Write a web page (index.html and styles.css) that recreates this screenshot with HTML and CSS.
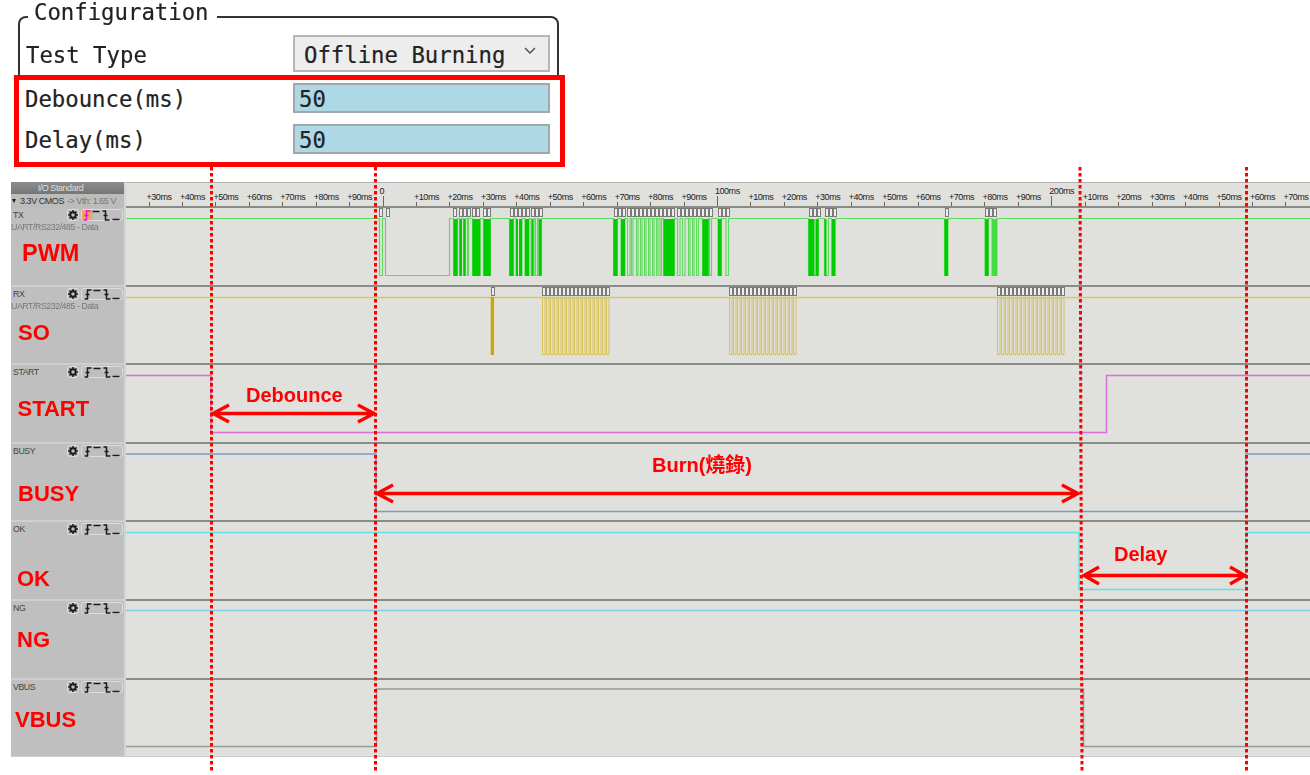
FILE: index.html
```html
<!DOCTYPE html>
<html lang="en">
<head>
<meta charset="utf-8">
<title>Offline Burning timing</title>
<link rel="stylesheet" href="styles.css">
</head>
<body>
<svg class="defs" width="0" height="0" aria-hidden="true">
  <defs>
    <pattern id="mk" patternUnits="userSpaceOnUse" width="4" height="9">
      <rect x="0.5" y="0.5" width="3" height="8" fill="#ecece9" stroke="#7a7a7a"/>
    </pattern>
    <symbol id="gear" viewBox="0 0 10 10">
      <circle cx="5" cy="5" r="2.7" fill="none" stroke="#1c1c1c" stroke-width="1.9"/>
      <path d="M5 0V2M5 8V10M0 5H2M8 5H10M1.5 1.5L3 3M7 7L8.5 8.5M8.5 1.5L7 3M3 7L1.5 8.5" stroke="#1c1c1c" stroke-width="1.5"/>
    </symbol>
    <symbol id="rise" viewBox="0 0 8 11"><path d="M0.5 10H3.5V1H7.5M1.5 5.5H5.5" fill="none" stroke="currentColor" stroke-width="1.5"/></symbol>
    <symbol id="high" viewBox="0 0 8 11"><path d="M0.5 1.5H7.5" fill="none" stroke="currentColor" stroke-width="1.5"/></symbol>
    <symbol id="fall" viewBox="0 0 8 11"><path d="M0.5 1H3.5V10H7.5M1.5 5.5H5.5" fill="none" stroke="currentColor" stroke-width="1.5"/></symbol>
    <symbol id="low" viewBox="0 0 8 11"><path d="M0.5 9.5H7.5" fill="none" stroke="currentColor" stroke-width="1.5"/></symbol>
  </defs>
</svg>

<section class="config">
  <div class="frame">
    <span class="legend">Configuration</span>
    <div class="row">
      <span class="label">Test Type</span>
      <div class="select">Offline Burning
        <svg class="chev" width="12" height="7" viewBox="0 0 12 7"><path d="M1 1L6 6L11 1" fill="none" stroke="#555" stroke-width="1.5"/></svg>
      </div>
    </div>
  </div>
  <div class="highlight">
    <div class="row"><span class="label">Debounce(ms)</span><div class="input">50</div></div>
    <div class="row"><span class="label">Delay(ms)</span><div class="input">50</div></div>
  </div>
</section>

<section class="analyzer">
  <div class="io">
    <div class="io-title">I/O Standard</div>
    <div class="io-value"><span class="tri"></span><b>3.3V CMOS</b><span class="vth">-&gt; Vth: 1.65 V</span></div>
  </div>
  <div class="ruler">
    <div class="tick"><span>+30ms</span><i></i></div>
    <div class="tick"><span>+40ms</span><i></i></div>
    <div class="tick"><span>+50ms</span><i></i></div>
    <div class="tick"><span>+60ms</span><i></i></div>
    <div class="tick"><span>+70ms</span><i></i></div>
    <div class="tick"><span>+80ms</span><i></i></div>
    <div class="tick"><span>+90ms</span><i></i></div>
    <div class="tick major zero"><span>0</span><i></i></div>
    <div class="tick"><span>+10ms</span><i></i></div>
    <div class="tick"><span>+20ms</span><i></i></div>
    <div class="tick"><span>+30ms</span><i></i></div>
    <div class="tick"><span>+40ms</span><i></i></div>
    <div class="tick"><span>+50ms</span><i></i></div>
    <div class="tick"><span>+60ms</span><i></i></div>
    <div class="tick"><span>+70ms</span><i></i></div>
    <div class="tick"><span>+80ms</span><i></i></div>
    <div class="tick"><span>+90ms</span><i></i></div>
    <div class="tick major"><span>100ms</span><i></i></div>
    <div class="tick"><span>+10ms</span><i></i></div>
    <div class="tick"><span>+20ms</span><i></i></div>
    <div class="tick"><span>+30ms</span><i></i></div>
    <div class="tick"><span>+40ms</span><i></i></div>
    <div class="tick"><span>+50ms</span><i></i></div>
    <div class="tick"><span>+60ms</span><i></i></div>
    <div class="tick"><span>+70ms</span><i></i></div>
    <div class="tick"><span>+80ms</span><i></i></div>
    <div class="tick"><span>+90ms</span><i></i></div>
    <div class="tick major"><span>200ms</span><i></i></div>
    <div class="tick"><span>+10ms</span><i></i></div>
    <div class="tick"><span>+20ms</span><i></i></div>
    <div class="tick"><span>+30ms</span><i></i></div>
    <div class="tick"><span>+40ms</span><i></i></div>
    <div class="tick"><span>+50ms</span><i></i></div>
    <div class="tick"><span>+60ms</span><i></i></div>
    <div class="tick"><span>+70ms</span><i></i></div>
  </div>

  <!-- TX -->
  <div class="head first">
    <div class="head-row">
      <span class="name">TX</span>
      <span class="gearbtn"><svg width="10" height="10"><use href="#gear"/></svg></span>
      <span class="edges"><span class="edge active"><svg width="8" height="11"><use href="#rise"/></svg></span><span class="edge"><svg width="8" height="11"><use href="#high"/></svg></span><span class="edge"><svg width="8" height="11"><use href="#fall"/></svg></span><span class="edge"><svg width="8" height="11"><use href="#low"/></svg></span></span>
    </div>
    <div class="sub">UART/RS232/485 - Data</div>
  </div>
  <div class="track first">
    <svg class="wave" viewBox="126 208 1184 77" preserveAspectRatio="none">
      <g class="tx-markers">
        <rect transform="translate(379 208)" width="4" height="9"/>
        <rect transform="translate(386 208)" width="4" height="9"/>
        <rect transform="translate(453 208)" width="4" height="9"/>
        <rect transform="translate(459 208)" width="12" height="9"/>
        <rect transform="translate(472 208)" width="8" height="9"/>
        <rect transform="translate(483 208)" width="8" height="9"/>
        <rect transform="translate(510 208)" width="20" height="9"/>
        <rect transform="translate(531 208)" width="12" height="9"/>
        <rect transform="translate(614 208)" width="12" height="9"/>
        <rect transform="translate(627 208)" width="36" height="9"/>
        <rect transform="translate(663 208)" width="12" height="9"/>
        <rect transform="translate(677 208)" width="36" height="9"/>
        <rect transform="translate(718 208)" width="12" height="9"/>
        <rect transform="translate(809 208)" width="12" height="9"/>
        <rect transform="translate(825 208)" width="12" height="9"/>
        <rect transform="translate(945 208)" width="4" height="9"/>
        <rect transform="translate(985 208)" width="12" height="9"/>
      </g>
      <path class="line tx" d="M126 218.5H379.5V275.5H382.5V218.5H385.5V275.5H449.5V218.5H453.5V275.5H457.5V218.5H459.5V275.5H461.5V218.5H463.5V275.5H465.5V218.5H467.5V275.5H468.5V218.5H472.5V275.5H480.5V218.5H483.5V275.5H490.5V218.5H509.5V275.5H513.5V218.5H516V275.5H522V218.5H525V275.5H529V218.5H531V275.5H534V218.5H535.5V275.5H537.5V218.5H538.5V275.5H541.5V218.5H613.5V275.5H617.5V218.5H621V275.5H625V218.5H627.5V275.5H630V218.5H631.5V275.5H633V218.5H636.5V275.5H638V218.5H640.5V275.5H642V218.5H644.5V275.5H646V218.5H648.5V275.5H650V218.5H652.5V275.5H654V218.5H656.5V275.5H658V218.5H660V275.5H661.5V218.5H663.5V275.5H674.5V218.5H677.5V275.5H680V218.5H682.5V275.5H685V218.5H688.5V275.5H690V218.5H692.5V275.5H694V218.5H696.5V275.5H698.5V218.5H702.5V275.5H708.5V218.5H709.5V275.5H711.5V218.5H718V275.5H721.5V218.5H726V275.5H728.5V218.5H808.5V275.5H818.5V218.5H824.5V275.5H828.5V218.5H831.5V275.5H835.5V218.5H944.5V275.5H948V218.5H985V275.5H988.5V218.5H992V275.5H997V218.5H1310"/>
      <g class="tx-solid">
        <rect x="453.5" y="219" width="4" height="57"/>
        <rect x="459.5" y="219" width="2.5" height="57"/>
        <rect x="463.5" y="219" width="2" height="57"/>
        <rect x="472.5" y="219" width="7.5" height="57"/>
        <rect x="483.5" y="219" width="7" height="57"/>
        <rect x="509.5" y="219" width="4" height="57"/>
        <rect x="516" y="219" width="2" height="57"/>
        <rect x="519" y="219" width="3" height="57"/>
        <rect x="525" y="219" width="4" height="57"/>
        <rect x="531.5" y="219" width="2" height="57"/>
        <rect x="539" y="219" width="2.5" height="57"/>
        <rect x="613.5" y="219" width="4" height="57"/>
        <rect x="621" y="219" width="4" height="57"/>
        <rect x="663.5" y="219" width="11" height="57"/>
        <rect x="702.5" y="219" width="6" height="57"/>
        <rect x="718" y="219" width="3.5" height="57"/>
        <rect x="808.5" y="219" width="6" height="57"/>
        <rect x="815.5" y="219" width="3" height="57"/>
        <rect x="824.5" y="219" width="2" height="57"/>
        <rect x="832" y="219" width="3" height="57"/>
        <rect x="944.5" y="219" width="3.5" height="57"/>
        <rect x="985" y="219" width="3.5" height="57"/>
        <rect class="pale" x="992" y="219" width="5" height="57"/>
      </g>
    </svg>
  </div>

  <!-- RX -->
  <div class="head">
    <div class="head-row">
      <span class="name">RX</span>
      <span class="gearbtn"><svg width="10" height="10"><use href="#gear"/></svg></span>
      <span class="edges"><span class="edge"><svg width="8" height="11"><use href="#rise"/></svg></span><span class="edge"><svg width="8" height="11"><use href="#high"/></svg></span><span class="edge"><svg width="8" height="11"><use href="#fall"/></svg></span><span class="edge"><svg width="8" height="11"><use href="#low"/></svg></span></span>
    </div>
    <div class="sub">UART/RS232/485 - Data</div>
  </div>
  <div class="track">
    <svg class="wave" viewBox="126 287 1184 76" preserveAspectRatio="none">
      <g class="tx-markers">
        <rect transform="translate(491 287)" width="4" height="9"/>
        <rect transform="translate(542 287)" width="68" height="9"/>
        <rect transform="translate(729 287)" width="68" height="9"/>
        <rect transform="translate(997 287)" width="68" height="9"/>
      </g>
      <path class="line rx" d="M126 297.5H1310"/>
      <rect class="rx-solid" x="490.7" y="297" width="3.3" height="58"/>
      <path class="rx-pulses" d="M542.5 297.5v57h2.5v-57h1.5v57h2.5v-57h1.5v57h2.5v-57h1.5v57h2.5v-57h1.5v57h2.5v-57h1.5v57h2.5v-57h1.5v57h2.5v-57h1.5v57h2.5v-57h1.5v57h2.5v-57h1.5v57h2.5v-57h1.5v57h2.5v-57h1.5v57h2.5v-57h1.5v57h2.5v-57h1.5v57h2.5v-57h1.5v57h2.5v-57h1.5v57h2.5v-57h1.5v57h2.5v-57"/>
      <path class="rx-pulses" d="M729.5 297.5v57h2.5v-57h1.5v57h2.5v-57h1.5v57h2.5v-57h1.5v57h2.5v-57h1.5v57h2.5v-57h1.5v57h2.5v-57h1.5v57h2.5v-57h1.5v57h2.5v-57h1.5v57h2.5v-57h1.5v57h2.5v-57h1.5v57h2.5v-57h1.5v57h2.5v-57h1.5v57h2.5v-57h1.5v57h2.5v-57h1.5v57h2.5v-57h1.5v57h2.5v-57h1.5v57h2.5v-57"/>
      <path class="rx-pulses" d="M997.5 297.5v57h2.5v-57h1.5v57h2.5v-57h1.5v57h2.5v-57h1.5v57h2.5v-57h1.5v57h2.5v-57h1.5v57h2.5v-57h1.5v57h2.5v-57h1.5v57h2.5v-57h1.5v57h2.5v-57h1.5v57h2.5v-57h1.5v57h2.5v-57h1.5v57h2.5v-57h1.5v57h2.5v-57h1.5v57h2.5v-57h1.5v57h2.5v-57h1.5v57h2.5v-57h1.5v57h2.5v-57"/>
    </svg>
  </div>

  <!-- START -->
  <div class="head">
    <div class="head-row">
      <span class="name">START</span>
      <span class="gearbtn"><svg width="10" height="10"><use href="#gear"/></svg></span>
      <span class="edges"><span class="edge"><svg width="8" height="11"><use href="#rise"/></svg></span><span class="edge"><svg width="8" height="11"><use href="#high"/></svg></span><span class="edge"><svg width="8" height="11"><use href="#fall"/></svg></span><span class="edge"><svg width="8" height="11"><use href="#low"/></svg></span></span>
    </div>
  </div>
  <div class="track">
    <svg class="wave" viewBox="126 365 1184 77" preserveAspectRatio="none">
      <path class="line start" d="M126 375.5H211V432.5H1106.5V375.5H1310"/>
    </svg>
  </div>

  <!-- BUSY -->
  <div class="head">
    <div class="head-row">
      <span class="name">BUSY</span>
      <span class="gearbtn"><svg width="10" height="10"><use href="#gear"/></svg></span>
      <span class="edges"><span class="edge"><svg width="8" height="11"><use href="#rise"/></svg></span><span class="edge"><svg width="8" height="11"><use href="#high"/></svg></span><span class="edge"><svg width="8" height="11"><use href="#fall"/></svg></span><span class="edge"><svg width="8" height="11"><use href="#low"/></svg></span></span>
    </div>
  </div>
  <div class="track">
    <svg class="wave" viewBox="126 444 1184 76" preserveAspectRatio="none">
      <path class="line busy" d="M126 454H376V511.5H1246V454H1310"/>
    </svg>
  </div>

  <!-- OK -->
  <div class="head">
    <div class="head-row">
      <span class="name">OK</span>
      <span class="gearbtn"><svg width="10" height="10"><use href="#gear"/></svg></span>
      <span class="edges"><span class="edge"><svg width="8" height="11"><use href="#rise"/></svg></span><span class="edge"><svg width="8" height="11"><use href="#high"/></svg></span><span class="edge"><svg width="8" height="11"><use href="#fall"/></svg></span><span class="edge"><svg width="8" height="11"><use href="#low"/></svg></span></span>
    </div>
  </div>
  <div class="track">
    <svg class="wave" viewBox="126 522 1184 77" preserveAspectRatio="none">
      <path class="line ok" d="M126 532.5H1079V589.5H1246V532.5H1310"/>
    </svg>
  </div>

  <!-- NG -->
  <div class="head">
    <div class="head-row">
      <span class="name">NG</span>
      <span class="gearbtn"><svg width="10" height="10"><use href="#gear"/></svg></span>
      <span class="edges"><span class="edge"><svg width="8" height="11"><use href="#rise"/></svg></span><span class="edge"><svg width="8" height="11"><use href="#high"/></svg></span><span class="edge"><svg width="8" height="11"><use href="#fall"/></svg></span><span class="edge"><svg width="8" height="11"><use href="#low"/></svg></span></span>
    </div>
  </div>
  <div class="track">
    <svg class="wave" viewBox="126 601 1184 77" preserveAspectRatio="none">
      <path class="line ng" d="M126 610.5H1310"/>
    </svg>
  </div>

  <!-- VBUS -->
  <div class="head">
    <div class="head-row">
      <span class="name">VBUS</span>
      <span class="gearbtn"><svg width="10" height="10"><use href="#gear"/></svg></span>
      <span class="edges"><span class="edge"><svg width="8" height="11"><use href="#rise"/></svg></span><span class="edge"><svg width="8" height="11"><use href="#high"/></svg></span><span class="edge"><svg width="8" height="11"><use href="#fall"/></svg></span><span class="edge"><svg width="8" height="11"><use href="#low"/></svg></span></span>
    </div>
  </div>
  <div class="track">
    <svg class="wave" viewBox="126 680 1184 76" preserveAspectRatio="none">
      <path class="line vbus" d="M126 746.5H376.5V689H1083.5V746.5H1310"/>
    </svg>
  </div>
</section>

<svg class="notes" width="1310" height="775" viewBox="0 0 1310 775">
  <g class="dots">
    <path d="M211.5 167V772"/>
    <path d="M375.5 167V772"/>
    <path d="M1080 167L1082 772"/>
    <path d="M1246.5 167V772"/>
  </g>
  <g class="arrow">
    <path d="M213 413.5H374M229 405L213 413.5L229 422M358 405L374 413.5L358 422"/>
    <path d="M377 493.5H1078M393 485L377 493.5L393 502M1062 485L1078 493.5L1062 502"/>
    <path d="M1084 575.5H1245M1099 567L1084 575.5L1099 584M1230 567L1245 575.5L1230 584"/>
  </g>
  <text class="span-note" x="246" y="402">Debounce</text>
  <text class="span-note" x="652" y="472">Burn(燒錄)</text>
  <text class="span-note" x="1114" y="561">Delay</text>
  <text class="chan-note wide" x="22" y="261">PWM</text>
  <text class="chan-note" x="18" y="340">SO</text>
  <text class="chan-note" x="17.5" y="416">START</text>
  <text class="chan-note" x="18" y="501">BUSY</text>
  <text class="chan-note" x="17" y="586">OK</text>
  <text class="chan-note" x="17" y="647">NG</text>
  <text class="chan-note" x="15" y="727">VBUS</text>
</svg>
</body>
</html>
```

FILE: styles.css
```css
* { box-sizing: border-box; }
html, body { margin: 0; padding: 0; background: #fff; overflow: hidden; }
body { position: relative; width: 1310px; height: 775px; font-family: "Liberation Sans", sans-serif; }
.defs { position: absolute; }

/* configuration */
.config { height: 182px; padding-top: 16px; font: 22.3px/26px "DejaVu Sans Mono", monospace; color: #222; -webkit-text-stroke: 0.2px #222; filter: blur(0.35px); }
.frame { position: relative; margin-left: 18px; width: 541px; height: 59px; border: 2px solid #333; border-bottom: 0; border-radius: 8px 8px 0 0; padding-top: 17px; }
.legend { position: absolute; left: 8px; top: -19px; padding: 0 8px 0 6px; background: #fff; }
.row { display: grid; grid-template-columns: 267px 257px; padding-left: 6px; align-items: center; }
.label { padding-top: 2px; }
.select { position: relative; height: 37px; padding-left: 9px; line-height: 37px; border: 2px solid #b6b6b6; background: #ededed; }
.chev { position: absolute; right: 12px; top: 10px; }
.highlight { display: flex; flex-direction: column; gap: 11px; margin-left: 14px; width: 551px; height: 92px; padding-top: 3px; border: 5px solid #f00; background: #fff; }
.highlight .row { grid-template-columns: 268px 257px; }
.input { height: 30px; padding-left: 4px; line-height: 28px; border: 2px solid #a2a8aa; background: #add8e6; }

/* analyzer */
.analyzer { display: grid; grid-template-columns: 115px 1184px; grid-template-rows: 26px 77px 78px 79px 78px 79px 79px 78px; margin-left: 11px; width: 1299px; border-bottom: 1px solid #ccc; filter: blur(0.3px); }
.io { background: #bcbcbc; font-size: 9px; line-height: 12px; letter-spacing: -0.45px; color: #333; border-right: 2px solid #d4d4d4; }
.io-title { height: 12px; padding-right: 14px; text-align: center; color: #ddd; background: linear-gradient(#8c8c8c, #767676); }
.io-value { display: flex; align-items: center; height: 13px; white-space: nowrap; }
.io-value b { font-weight: 400; margin-left: 4px; }
.tri { width: 0; height: 0; border: 2.5px solid transparent; border-top: 4px solid #222; border-bottom: 0; margin-left: 1px; }
.vth { margin-left: 3px; color: #777; }

.ruler { display: flex; height: 26px; padding-left: 22.5px; overflow: hidden; background: #e0e0dc; border-top: 1px solid #b0b0b0; border-bottom: 2px solid #8b8b87; font-size: 9px; line-height: 10px; letter-spacing: -0.45px; color: #222; }
.tick { flex: none; width: 33.45px; display: flex; flex-direction: column; justify-content: flex-end; }
.tick span { margin-left: -2px; white-space: nowrap; }
.tick i { display: block; width: 1px; height: 4px; background: #666; }
.tick.major i { height: 10px; }
.tick.zero span { margin-left: -3px; }

.head { background: #bfbfbf; padding: 1px 1px 0 0; border-top: 2px solid #cfcfcf; border-right: 2px solid #d4d4d4; color: #444; font-size: 8.8px; line-height: 12px; letter-spacing: -0.45px; }
.head.first { border-top: 0; }
.head-row { display: flex; align-items: center; gap: 2px; height: 12px; }
.name { flex: 1; padding-left: 2px; }
.gearbtn { display: flex; align-items: center; justify-content: center; width: 12px; height: 12px; border: 1px solid #dcdcdc; border-radius: 3px; }
.edges { display: flex; justify-content: space-between; width: 42.5px; height: 12px; padding: 0 2px; border: 1px solid #dcdcdc; border-radius: 3px; color: #1c1c1c; }
.edge { display: block; width: 8px; height: 10px; line-height: 0; }
.edge.active { width: 10px; margin: 0 -1px 0 -2px; padding-left: 1px; background: #efa65a; color: #f010e8; }
.sub { margin-top: 1px; line-height: 11px; white-space: nowrap; color: #777; }

.track { background: #e0e0dc; border-top: 2px solid #8b8b87; }
.track.first { border-top: 0; }
.wave { display: block; width: 100%; height: 100%; overflow: visible; }
.line { fill: none; stroke-width: 1.5; }
.tx { stroke: #5bdc5b; stroke-width: 1.1; }
.rx { stroke: #dac868; }
.start { stroke: #dc6edc; }
.busy { stroke: #6f9dcc; }
.ok { stroke: #5fe4e4; }
.ng { stroke: #7fd0ea; }
.vbus { stroke: #999; }
.tx-markers rect { fill: url(#mk); }
.tx-solid rect { fill: #00cc00; }
.tx-solid .pale { fill: #44dd44; }
.rx-solid { fill: #c9a800; }
.rx-pulses { fill: none; stroke: #d8c258; stroke-width: 1; }

/* annotations over the capture */
.notes { position: absolute; left: 0; top: 0; pointer-events: none; }
.dots path { fill: none; stroke: #f00; stroke-width: 3; stroke-dasharray: 3.5 2.5; }
.arrow path { fill: none; stroke: #f00; stroke-width: 3.3; }
.span-note { fill: #f00; font: bold 20px "Liberation Sans", "Noto Sans CJK TC", sans-serif; }
.chan-note { fill: #f00; font: bold 22px "Liberation Sans", sans-serif; }
.wide { font-size: 23.5px; }
```
